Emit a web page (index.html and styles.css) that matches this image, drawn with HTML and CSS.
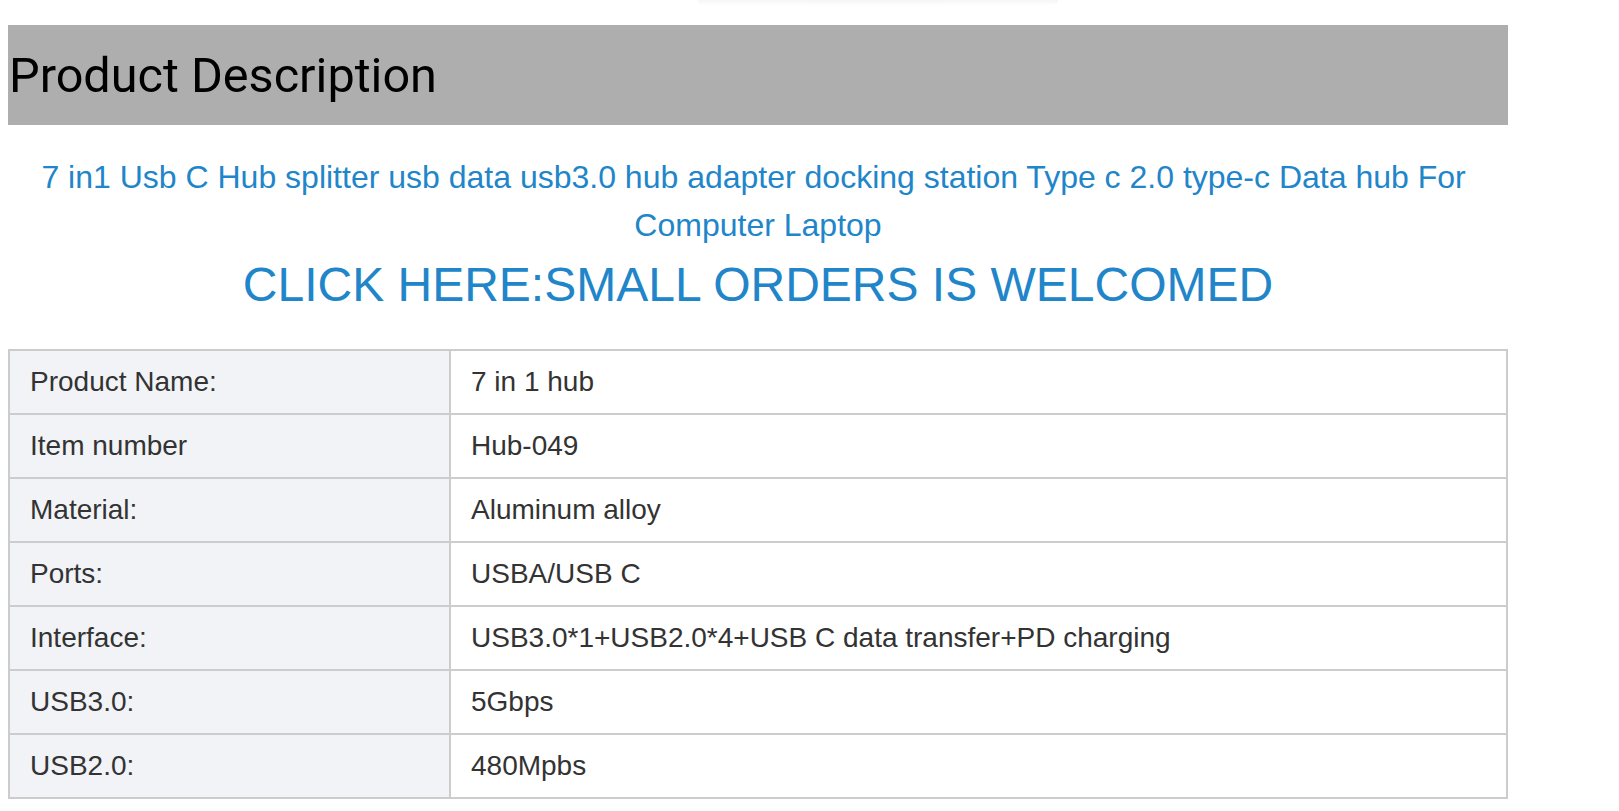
FILE: index.html
```html
<!DOCTYPE html>
<html lang="en">
<head>
<meta charset="utf-8">
<title>Product Description</title>
<link rel="stylesheet" href="styles.css">
</head>
<body>
<div class="page">
  <div class="top-strip"><div class="img-edge"></div></div>
  <h2 class="section-head">Product Description</h2>
  <div class="intro">
    <p class="title">7 in1 Usb C Hub splitter usb data usb3.0 hub adapter docking station Type c 2.0 type-c Data hub For&nbsp; Computer Laptop</p>
    <p class="cta"><a class="cta-link" href="#">CLICK HERE:SMALL ORDERS IS WELCOMED</a></p>
  </div>
  <table class="spec">
    <colgroup><col class="c1"><col class="c2"></colgroup>
    <tbody>
      <tr><td class="k">Product Name:</td><td class="v">7 in 1 hub</td></tr>
      <tr><td class="k">Item number</td><td class="v">Hub-049</td></tr>
      <tr><td class="k">Material:</td><td class="v">Aluminum alloy</td></tr>
      <tr><td class="k">Ports:</td><td class="v">USBA/USB C</td></tr>
      <tr><td class="k">Interface:</td><td class="v">USB3.0*1+USB2.0*4+USB C data transfer+PD charging</td></tr>
      <tr><td class="k">USB3.0:</td><td class="v">5Gbps</td></tr>
      <tr><td class="k">USB2.0:</td><td class="v">480Mpbs</td></tr>
    </tbody>
  </table>
</div>
</body>
</html>
```
FILE: styles.css
```css
html, body {
  margin: 0;
  padding: 0;
  background: #ffffff;
}
.page {
  width: 1500px;
  padding: 0 0 0 8px;
  font-family: "Liberation Sans", Arial, sans-serif;
}
.top-strip {
  height: 25px;
}
.img-edge {
  margin-left: 690px;
  width: 360px;
  height: 6px;
  background: linear-gradient(to bottom, #f6f6f6, #ffffff);
  border-radius: 0 0 40% 40%;
}
.section-head {
  margin: 0;
  height: 100px;
  display: flex;
  align-items: center;
  background: #afaeaf;
  font-family: Roboto, "Liberation Sans", sans-serif;
  font-weight: 400;
  font-size: 48.6px;
  color: #000;
  padding-left: 1px;
}
.intro {
  padding-top: 28px;
  text-align: center;
}
.title {
  margin: 0;
  font-size: 32px;
  line-height: 48px;
  color: #2185c9;
}
.cta {
  margin: 0;
  font-size: 48px;
  line-height: 72px;
}
.cta-link {
  color: #2185c9;
  text-decoration: none;
}
.spec {
  margin-top: 28px;
  width: 1500px;
  border-collapse: collapse;
  table-layout: fixed;
  font-size: 28px;
  color: #333;
}
.c1 { width: 441px; }
.spec td {
  border: 2px solid #cccccc;
  padding: 12px 20px;
  line-height: 38px;
  text-align: left;
}
.spec td.k {
  background: #f2f3f7;
}
.spec td.v {
  background: #ffffff;
}
```
